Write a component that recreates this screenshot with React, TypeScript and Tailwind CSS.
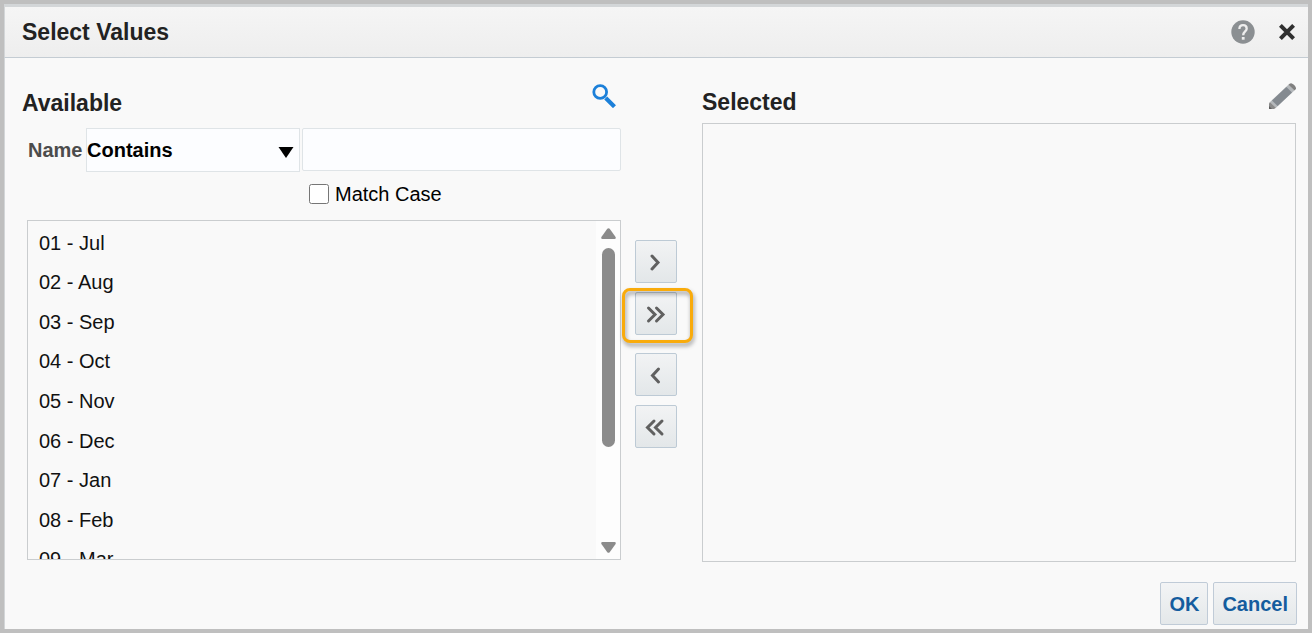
import { useState } from "react";

const periods = [
  "01 - Jul",
  "02 - Aug",
  "03 - Sep",
  "04 - Oct",
  "05 - Nov",
  "06 - Dec",
  "07 - Jan",
  "08 - Feb",
  "09 - Mar",
];

const shuttleActions = [
  { name: "Move", path: "M7 5 L13 11.5 L7 18", spacing: "" },
  { name: "Move All", path: "M3.5 5 L10 11.5 L3.5 18 M11.5 5 L18 11.5 L11.5 18", spacing: "mt-[9px]", highlighted: true },
  { name: "Remove", path: "M13.5 5 L7.5 11.5 L13.5 18", spacing: "mt-[18px]" },
  { name: "Remove All", path: "M9 5 L2.5 11.5 L9 18 M17 5 L10.5 11.5 L17 18", spacing: "mt-[9px]" },
];

const HelpIcon = () => (
  <svg className="size-6" viewBox="0 0 24 24" fill="none">
    <circle cx="12" cy="12" r="11.7" fill="#8b8f92" />
    <path
      d="M8.4 9 C8.4 6.6 10 5.2 12.1 5.2 C14.3 5.2 15.7 6.6 15.7 8.7 C15.7 11.4 12.2 11.6 12.2 15.2"
      stroke="#eeeeee"
      strokeWidth="2.3"
    />
    <rect x="10.8" y="17" width="2.8" height="2.7" fill="#eeeeee" />
  </svg>
);

const CloseIcon = () => (
  <svg className="size-4" viewBox="0 0 16 16" stroke="#303030" strokeWidth="4">
    <path d="M1.4 1.4 L14.6 14.6 M14.6 1.4 L1.4 14.6" />
  </svg>
);

const SearchIcon = () => (
  <svg className="size-6" viewBox="0 0 24 24" fill="none" stroke="#1c80d9">
    <circle cx="8.2" cy="8" r="6.4" strokeWidth="2.8" />
    <path d="M15.2 15.4 L21 21.2" strokeWidth="4.2" strokeLinecap="square" />
  </svg>
);

const PencilIcon = () => (
  <svg className="h-[26px] w-[27px]" viewBox="0 0 27 26">
    <path d="M1 19 L19.4 1.8 L25.4 7.4 L7 24.8 Z" fill="#b4b8bb" />
    <path d="M3 17.4 L17.4 4 L23 9.4 L8.6 23 Z" fill="#848a90" />
    <path d="M19.4 1.8 L20.6 0.8 Q21.6 0 22.8 0.4 Q27.2 2.4 27 6 L25.4 7.4 Z" fill="#808080" />
    <path d="M1 19 L7 24.8 L5 26 H0 V20.4 Z" fill="#8a8a8a" />
    <path d="M0 23 L3 26 H0 Z" fill="#5e5e5e" />
  </svg>
);

const Scrollbar = () => (
  <div className="flex w-6 shrink-0 flex-col items-center bg-[#fdfdfd] pt-[7px] pb-[6px]" aria-hidden="true">
    <svg className="h-[11px] w-[15px] shrink-0" viewBox="0 0 15 11" fill="#8b8b8b">
      <path d="M6.3 0.8 Q7.5 -0.5 8.7 0.8 L14.6 9 Q15.2 11 13.6 11 H1.4 Q-0.2 11 0.4 9 Z" />
    </svg>
    <div className="mt-[9px] h-[199px] w-[13px] rounded-full bg-[#8b8b8b]" />
    <svg className="mt-auto h-[11px] w-[15px] shrink-0" viewBox="0 0 15 11" fill="#8b8b8b">
      <path d="M6.3 10.2 Q7.5 11.5 8.7 10.2 L14.6 2 Q15.2 0 13.6 0 H1.4 Q-0.2 0 0.4 2 Z" />
    </svg>
  </div>
);

export default function App() {
  const [query, setQuery] = useState("");
  const [matchCase, setMatchCase] = useState(false);

  return (
    <div className="flex min-h-screen flex-col border-4 border-[#bfbfbf] bg-[#f9f9f9] font-['Liberation_Sans',Arial,sans-serif] text-xl text-[#111]">
      <header className="flex h-[54px] items-center border-t-3 border-b border-l border-t-[#d3d6d8] border-b-[#c4ccd3] border-l-[#d3d6d8] bg-linear-to-b from-[#f5f5f5] to-[#eeeeee] pr-[13px] pl-[17px]">
        <h1 className="text-[23px] font-bold text-[#222]">Select Values</h1>
        <button type="button" aria-label="Help" className="ml-auto">
          <HelpIcon />
        </button>
        <button type="button" aria-label="Close" className="ml-6">
          <CloseIcon />
        </button>
      </header>

      <main className="flex flex-1 border-l border-[#d3d6d8] pt-5 pr-3 pl-[22px]">
        <section className="flex min-w-0 flex-1 flex-col">
          <div className="-ml-[5px] flex h-[50px] items-start justify-between pr-[5px]">
            <h2 className="text-[23px] leading-[50px] font-bold text-[#222]">Available</h2>
            <button type="button" aria-label="Search" className="mt-[6px]">
              <SearchIcon />
            </button>
          </div>

          <div className="flex h-11 items-start">
            <label htmlFor="operator" className="w-[59px] shrink-0 pl-px leading-11 font-bold text-[#4c4c4c]">
              Name
            </label>
            <div className="relative w-[214px] shrink-0">
              <select
                id="operator"
                className="h-11 w-full appearance-none border border-[#dfe4e7] bg-[#fcfdff] font-bold text-black"
              >
                <option>Contains</option>
              </select>
              <svg
                className="pointer-events-none absolute top-[19px] right-[6px] h-[11px] w-4"
                viewBox="0 0 16 11"
                fill="#000"
              >
                <path d="M0.5 0 H15.5 L8 11 Z" />
              </svg>
            </div>
            <input
              type="text"
              aria-label="Name value"
              value={query}
              onChange={(e) => setQuery(e.target.value)}
              className="ml-[2px] h-[43px] min-w-0 flex-1 rounded-xs border border-[#dfe4e7] bg-[#fcfdff] px-2"
            />
          </div>

          <div className="mb-1 flex h-11 items-center pl-[282px]">
            <input
              id="match-case"
              type="checkbox"
              checked={matchCase}
              onChange={(e) => setMatchCase(e.target.checked)}
              className="size-5"
            />
            <label htmlFor="match-case" className="pl-[6px] text-black">
              Match Case
            </label>
          </div>

          <div className="flex h-[340px] overflow-hidden border border-[#cacdcf]">
            <ul role="listbox" aria-label="Available" className="mt-[2px] grid h-[356px] flex-1 auto-rows-fr pl-[11px]">
              {periods.map((period) => (
                <li key={period} role="option" aria-selected="false" className="flex items-center">
                  {period}
                </li>
              ))}
            </ul>
            <Scrollbar />
          </div>
        </section>

        <div className="mr-[25px] ml-[14px] flex w-[42px] shrink-0 flex-col pt-[162px]">
          {shuttleActions.map((action) => (
            <div key={action.name} className={`relative ${action.spacing}`}>
              <button
                type="button"
                aria-label={action.name}
                className="flex h-[43px] w-full items-center justify-center rounded-xs border border-[#bdcad5] bg-linear-to-b from-[#f2f3f4] to-[#e3e7e9]"
              >
                <svg className="size-[22px]" viewBox="0 0 22 22" fill="none" stroke="#606060" strokeWidth="3">
                  <path d={action.path} strokeLinecap="round" />
                </svg>
              </button>
              {action.highlighted && (
                <div className="pointer-events-none absolute -top-1 -left-[13px] h-[55px] w-[71px] rounded-lg border-3 border-[#f9ab0b] drop-shadow-[1px_3px_2px_rgba(0,0,0,0.4)]" />
              )}
            </div>
          ))}
        </div>

        <section className="flex min-w-0 flex-1 flex-col">
          <div className="flex h-[45px] items-start justify-between">
            <h2 className="text-[23px] leading-12 font-bold text-[#222]">Selected</h2>
            <button type="button" aria-label="Edit" className="mt-[5px]">
              <PencilIcon />
            </button>
          </div>
          <ul role="listbox" aria-label="Selected" className="flex-1 border border-[#cacdcf]" />
        </section>
      </main>

      <footer className="flex justify-end gap-[5px] border-l border-[#d3d6d8] pt-5 pr-[11px] pb-1 font-bold text-[#145c9e]">
        <button
          type="button"
          className="h-[43px] rounded-xs border border-[#c0cbd7] bg-linear-to-b from-[#f3f4f5] to-[#e4e8ea] px-2"
        >
          OK
        </button>
        <button
          type="button"
          className="h-[43px] rounded-xs border border-[#c0cbd7] bg-linear-to-b from-[#f3f4f5] to-[#e4e8ea] px-2"
        >
          Cancel
        </button>
      </footer>
    </div>
  );
}
